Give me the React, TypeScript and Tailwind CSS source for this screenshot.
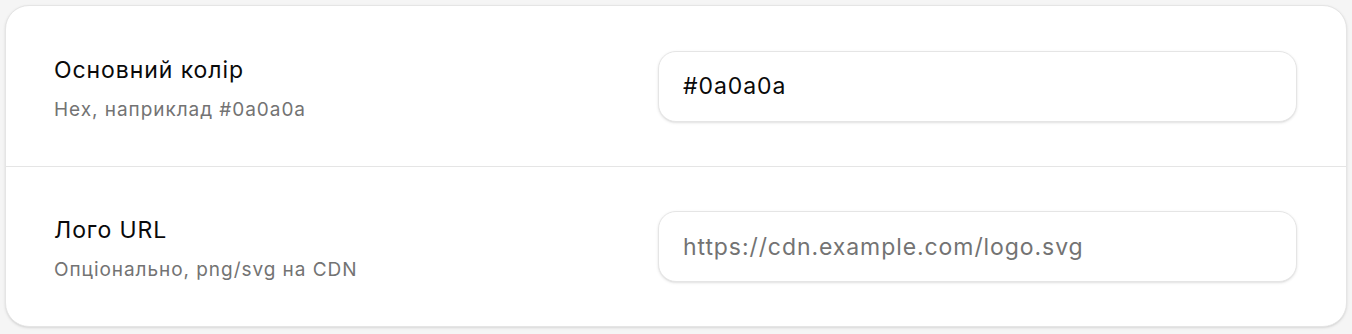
import React from "react";

const font = { fontFamily: "Inter, 'Noto Sans', sans-serif" };

function Row({
  label,
  desc,
  value,
  placeholder,
  top,
}: {
  label: string;
  desc: string;
  value?: string;
  placeholder?: string;
  top?: boolean;
}) {
  return (
    <div
      className={`flex h-[160px] items-center justify-between pl-[48px] pr-[49px] ${
        top ? "border-t border-[#e5e5e5]" : ""
      }`}
    >
      <div className="flex flex-col gap-[14px] pt-[5px]">
        <div className="text-[23px] leading-[28px] tracking-[0.04em] text-[#0a0a0a]">{label}</div>
        <div className="text-[19px] leading-[24px] tracking-[0.05em] text-[#737373]">{desc}</div>
      </div>
      <input
        readOnly
        value={value ?? ""}
        placeholder={placeholder}
        className="h-[71px] w-[639px] rounded-[18px] border border-[#e5e5e5] bg-white pl-[24px] text-[23px] tracking-[0.04em] text-[#0a0a0a] shadow-sm outline-none placeholder:text-[#737373]"
        style={font}
      />
    </div>
  );
}

export default function App() {
  return (
    <div className="min-h-[334px] w-full bg-[#f5f5f5] p-[5px]" style={font}>
      <div className="overflow-hidden rounded-[24px] border border-[#e5e5e5] bg-white shadow-sm">
        <Row label="Основний колір" desc="Hex, наприклад #0a0a0a" value="#0a0a0a" />
        <Row
          top
          label="Лого URL"
          desc="Опціонально, png/svg на CDN"
          placeholder="https://cdn.example.com/logo.svg"
        />
      </div>
    </div>
  );
}
